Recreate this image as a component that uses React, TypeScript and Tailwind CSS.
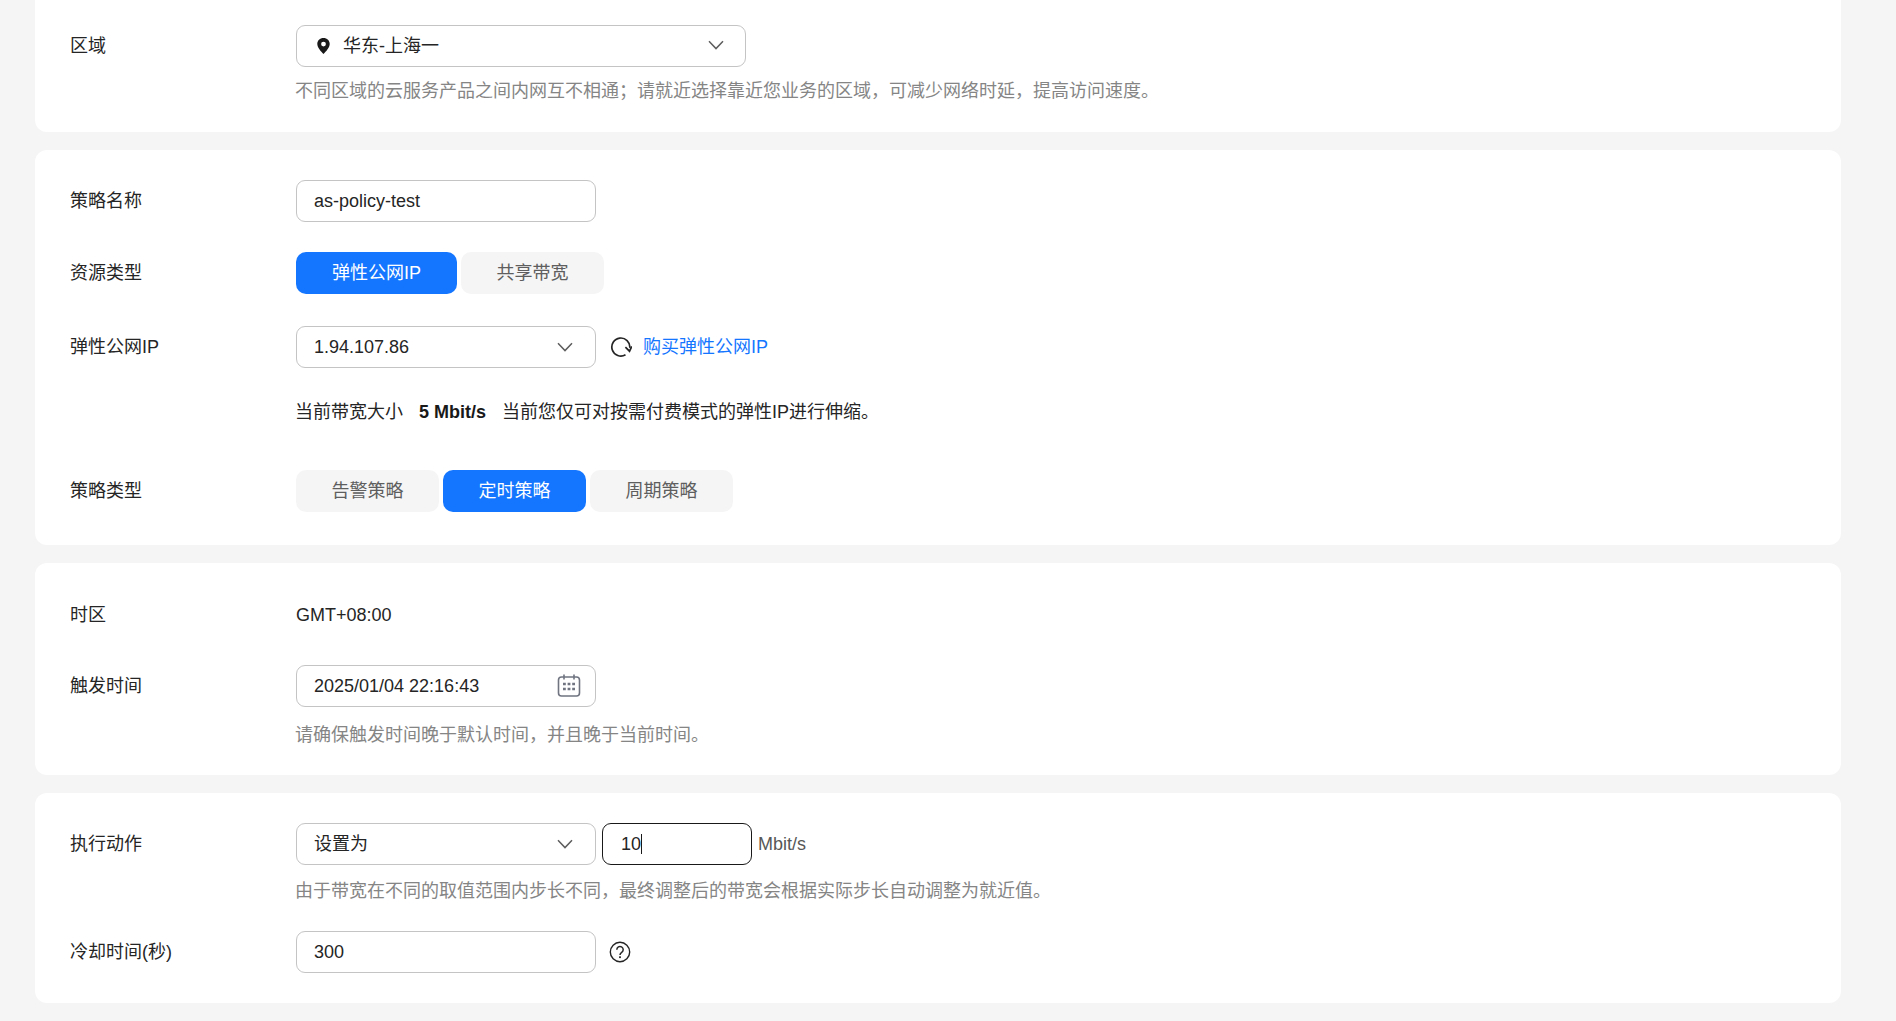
import type { ReactNode } from 'react'

const FONT = "font-['Liberation_Sans','Noto_Sans_CJK_SC',sans-serif]"

const Chevron = () => (
    <svg width="16" height="10" viewBox="0 0 16 10" fill="none" className="shrink-0">
        <path d="M1 1.2 8 8.6 15 1.2" stroke="#5e5e5e" strokeWidth="1.5" />
    </svg>
)

const Pin = () => (
    <svg width="13" height="16" viewBox="0 0 13 16" className="shrink-0">
        <path
            fillRule="evenodd"
            d="M6.5 0C2.9 0 .3 2.6.3 6c0 3.6 3.6 7.4 6.2 10 2.6-2.6 6.2-6.4 6.2-10C12.700 2.600 10.100 0 6.500 0Zm0 3.700a2.400 2.400 0 1 1 0 4.800 2.400 2.400 0 0 1 0-4.800Z"
            fill="#191919"
        />
    </svg>
)

const Refresh = () => (
    <svg width="22" height="22" viewBox="0 0 22 22" fill="none" className="shrink-0">
        <path d="M15.500 18.700A9 9 0 1 1 19.800 11.800" stroke="#252525" strokeWidth="1.7" />
        <path d="M15.400 11.200 19.500 15.200 21.800 10.400" stroke="#252525" strokeWidth="1.700" />
    </svg>
)

const Calendar = () => (
    <svg width="24" height="23" viewBox="0 0 24 23" fill="none" className="shrink-0">
        <rect x="1.500" y="3" width="21" height="19" rx="3" stroke="#6f7480" strokeWidth="1.600" />
        <path d="M7 .5v5M17 .5v5" stroke="#6f7480" strokeWidth="1.600" />
        <path d="M6 10h2.800M10.600 10h2.800M15.200 10h2.800M6 15h2.800M10.600 15h2.800M15.200 15h2.800" stroke="#6f7480" strokeWidth="2.400" />
    </svg>
)

const Help = () => (
    <svg width="22" height="22" viewBox="0 0 22 22" fill="none" className="shrink-0">
        <circle cx="11" cy="11" r="9.700" stroke="#252525" strokeWidth="1.400" />
        <path d="M7.800 8.700a3.200 3.200 0 1 1 4.900 2.700c-1.100.7-1.700 1.200-1.700 2.600" stroke="#252525" strokeWidth="1.500" />
        <rect x="10.100" y="15.300" width="1.800" height="1.800" fill="#252525" />
    </svg>
)

const Card = ({ className, children }: { className: string; children: ReactNode }) => (
    <section className={`w-[1806px] bg-white pl-[35px] ${className}`}>{children}</section>
)

const Row = ({ label, className = '', children }: { label: string; className?: string; children: ReactNode }) => (
    <div className={`flex items-center ${className}`}>
        <span className="w-[226px] shrink-0 text-[#252525]">{label}</span>
        {children}
    </div>
)

const Hint = ({ className = '', children }: { className?: string; children: ReactNode }) => (
    <p className={`ml-[225px] h-[26px] leading-[26px] text-[#858585] ${className}`}>{children}</p>
)

const Field = ({ className = 'w-[300px]', children }: { className?: string; children: ReactNode }) => (
    <div className={`flex h-[42px] items-center justify-between rounded-[9px] border border-[#c4c4c4] pl-[17px] pr-[22px] text-[#252525] ${className}`}>
        {children}
    </div>
)

const Tab = ({ active = false, className = 'w-[143px]', children }: { active?: boolean; className?: string; children: ReactNode }) => (
    <button
        className={`flex h-[42px] items-center justify-center rounded-[10px] ${active ? 'bg-[#1476ff] text-white' : 'bg-[#f5f5f5] text-[#5e5e5e]'} ${className}`}
    >
        {children}
    </button>
)

const App = () => {
    return (
        <div className={`flex h-[1021px] flex-col gap-[18px] overflow-hidden bg-[#f5f5f5] pl-[35px] text-[18px] ${FONT}`}>
            {/* Region */}
            <Card className="h-[132px] rounded-b-xl pt-[25px]">
                <Row label="区域">
                    <Field className="w-[450px]">
                        <span className="flex items-center gap-[13px] pl-[3px]">
                            <Pin />
                            <span className="mt-px">华东-上海一</span>
                        </span>
                        <span className="-mt-[3px] -mr-[1px]"><Chevron /></span>
                    </Field>
                </Row>
                <Hint className="mt-[11px]">不同区域的云服务产品之间内网互不相通；请就近选择靠近您业务的区域，可减少网络时延，提高访问速度。</Hint>
            </Card>

            {/* Policy */}
            <Card className="h-[395px] rounded-xl pt-[30px]">
                <Row label="策略名称">
                    <Field>as-policy-test</Field>
                </Row>
                <Row label="资源类型" className="mt-[30px]">
                    <div className="flex gap-1">
                        <Tab active className="w-[161px]">弹性公网IP</Tab>
                        <Tab className="w-[143px]">共享带宽</Tab>
                    </div>
                </Row>
                <Row label="弹性公网IP" className="mt-[32px]">
                    <Field>
                        <span>1.94.107.86</span>
                        <Chevron />
                    </Field>
                    <span className="ml-[14px]"><Refresh /></span>
                    <a className="ml-[11px] text-[#1476ff]">购买弹性公网IP</a>
                </Row>
                <div className="ml-[225px] mt-[31px] flex h-[26px] items-center text-[#252525]">
                    <span>当前带宽大小</span>
                    <b className="ml-[16px] font-bold text-[#191919]">5 Mbit/s</b>
                    <span className="ml-[16px]">当前您仅可对按需付费模式的弹性IP进行伸缩。</span>
                </div>
                <Row label="策略类型" className="mt-[45px]">
                    <div className="flex gap-1">
                        <Tab>告警策略</Tab>
                        <Tab active>定时策略</Tab>
                        <Tab>周期策略</Tab>
                    </div>
                </Row>
            </Card>

            {/* Time */}
            <Card className="h-[212px] rounded-xl pt-[39px]">
                <Row label="时区" className="h-[26px]">
                    <span className="text-[#252525]">GMT+08:00</span>
                </Row>
                <Row label="触发时间" className="mt-[37px]">
                    <Field className="w-[300px] !pr-[14px]">
                        <span>2025/01/04 22:16:43</span>
                        <span className="-mt-[2px]"><Calendar /></span>
                    </Field>
                </Row>
                <Hint className="mt-[15px]">请确保触发时间晚于默认时间，并且晚于当前时间。</Hint>
            </Card>

            {/* Action */}
            <Card className="h-[210px] rounded-xl pt-[30px]">
                <Row label="执行动作">
                    <Field>
                        <span>设置为</span>
                        <Chevron />
                    </Field>
                    <div className="ml-[6px] flex h-[42px] w-[150px] items-center rounded-[9px] border border-[#191919] pl-[18px] text-[#252525]">
                        10
                        <span className="h-[20px] w-px bg-[#191919]" />
                    </div>
                    <span className="ml-[6px] text-[#575757]">Mbit/s</span>
                </Row>
                <Hint className="mt-[13px]">由于带宽在不同的取值范围内步长不同，最终调整后的带宽会根据实际步长自动调整为就近值。</Hint>
                <Row label="冷却时间(秒)" className="mt-[27px]">
                    <Field>300</Field>
                    <span className="ml-[13px]"><Help /></span>
                </Row>
            </Card>
        </div>
    )
}

export default App
